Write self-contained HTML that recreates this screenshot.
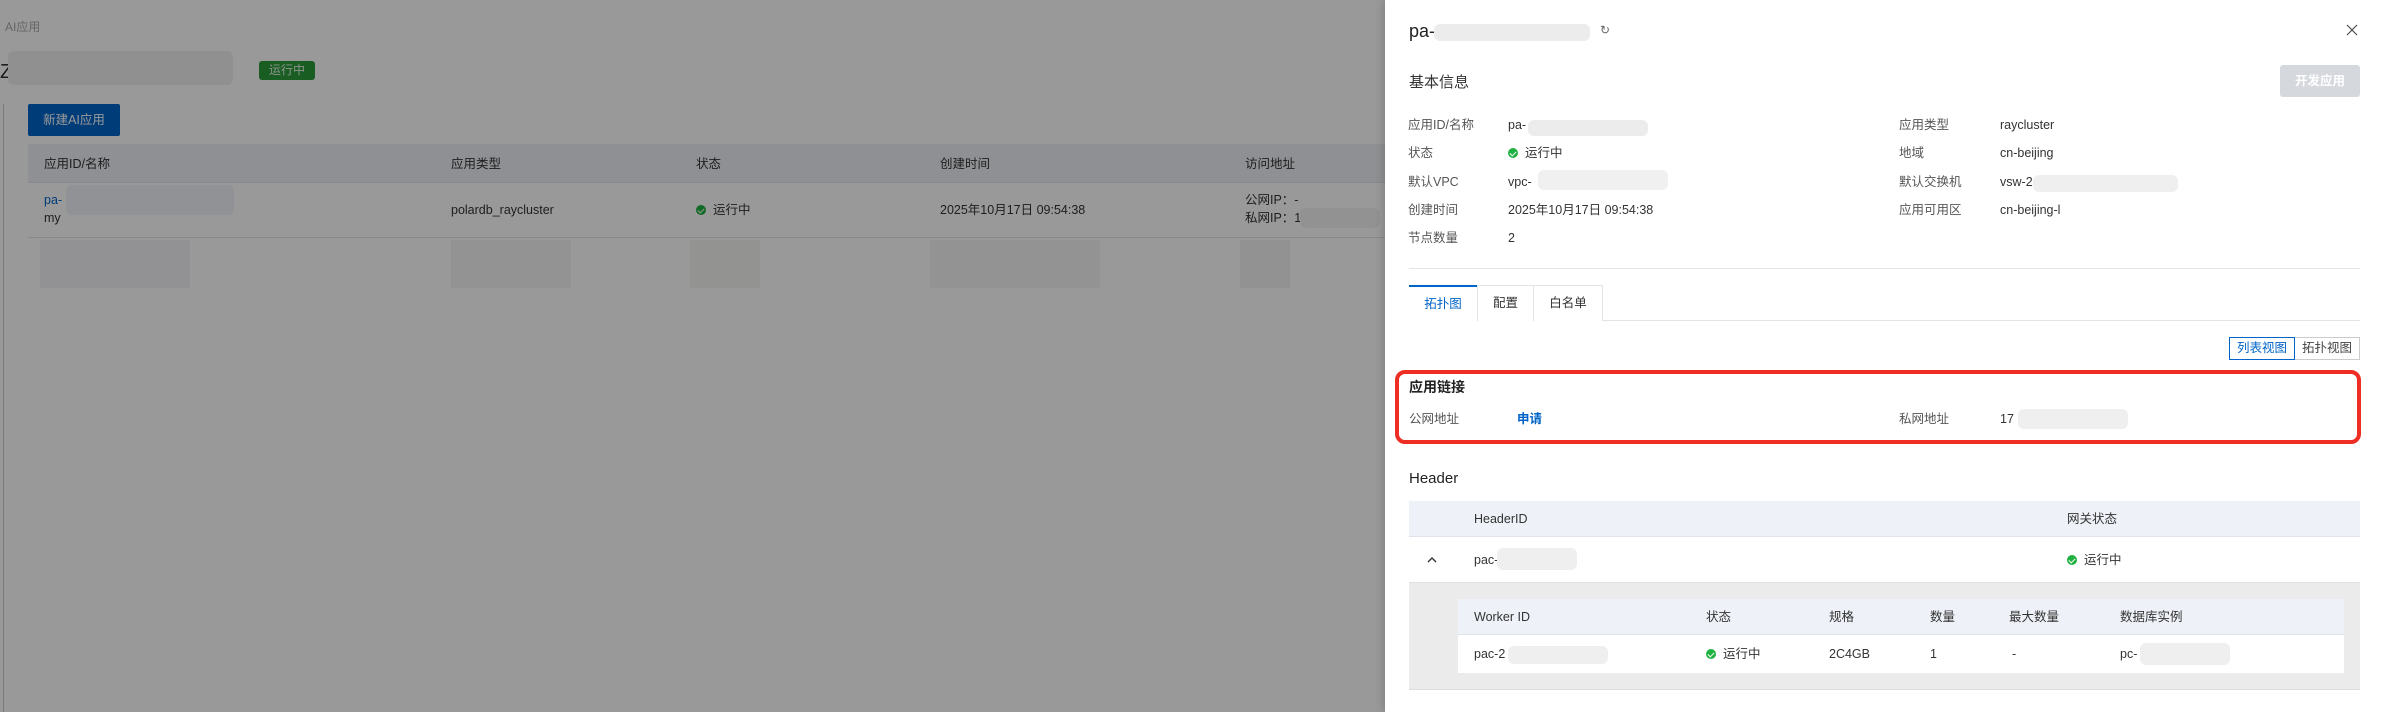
<!DOCTYPE html>
<html><head><meta charset="utf-8"><style>
*{margin:0;padding:0;box-sizing:border-box}
body{width:2383px;height:712px;overflow:hidden;position:relative;background:#fff;font-family:"Liberation Sans","Noto Sans CJK SC",sans-serif;font-size:12px;color:#333}
.a{position:absolute;white-space:nowrap;line-height:1}
.blur{position:absolute;background:#ececec;border-radius:6px}
.dot{display:inline-block;width:10px;height:10px;border-radius:50%;background:#1fb141;vertical-align:-1px;margin-right:7px;position:relative}
.dot:after{content:"";position:absolute;left:3px;top:2px;width:3px;height:5px;border:solid #fff;border-width:0 1.5px 1.5px 0;transform:rotate(45deg)}
#ov{position:absolute;left:0;top:0;width:1385px;height:712px;background:rgba(0,0,0,0.4)}
.lbl{color:#555;font-size:12.5px}
.val{color:#333;font-size:12.5px}
</style></head><body>
<div class="a" style="left:5px;top:21px;color:#aaa;font-size:12px">AI应用</div>
<div class="a" style="left:0;top:62px;font-size:20px;color:#333">Z</div>
<div class="blur" style="left:8px;top:51px;width:225px;height:34px;background:#f0f0f0"></div>
<div class="a" style="left:259px;top:61px;width:56px;height:19px;background:#2a9c3b;border-radius:3px;color:#e6f6e8;font-size:12px;line-height:19px;text-align:center">运行中</div>
<div style="position:absolute;left:3px;top:104px;width:1px;height:608px;background:#ccc"></div>
<div class="a" style="left:28px;top:104px;width:92px;height:32px;background:#0064c8;border-radius:2px;color:#fff;font-size:12.5px;line-height:32px;text-align:center">新建AI应用</div>
<div style="position:absolute;left:28px;top:144px;width:1357px;height:39px;background:#eef0f6;border-bottom:1px solid #e3e5ea"></div>
<div class="a" style="left:44px;top:158px;font-size:12.5px">应用ID/名称</div>
<div class="a" style="left:451px;top:158px;font-size:12.5px">应用类型</div>
<div class="a" style="left:696px;top:158px;font-size:12.5px">状态</div>
<div class="a" style="left:940px;top:158px;font-size:12.5px">创建时间</div>
<div class="a" style="left:1245px;top:158px;font-size:12.5px">访问地址</div>
<div class="a" style="left:44px;top:194px;color:#0064c8;font-size:12.5px">pa-</div>
<div class="a" style="left:44px;top:212px;font-size:12.5px">my</div>
<div class="blur" style="left:66px;top:185px;width:168px;height:30px;background:#f2f4f8"></div>
<div class="a" style="left:451px;top:204px;font-size:12.5px">polardb_raycluster</div>
<div class="a" style="left:696px;top:204px;font-size:12.5px"><span class="dot"></span>运行中</div>
<div class="a" style="left:940px;top:204px;font-size:12.5px">2025年10月17日 09:54:38</div>
<div class="a" style="left:1245px;top:194px;font-size:12.5px">公网IP：-</div>
<div class="a" style="left:1245px;top:212px;font-size:12.5px">私网IP：1</div>
<div class="blur" style="left:1300px;top:208px;width:80px;height:20px;background:#f3f3f3"></div>
<div style="position:absolute;left:28px;top:237px;width:1357px;height:1px;background:#e3e3e3"></div>
<div class="blur" style="left:40px;top:240px;width:150px;height:48px;background:#f3f4f7;border-radius:0"></div>
<div class="blur" style="left:451px;top:240px;width:120px;height:48px;background:#f5f5f5;border-radius:0"></div>
<div class="blur" style="left:690px;top:240px;width:70px;height:48px;background:#f5f5f3;border-radius:0"></div>
<div class="blur" style="left:930px;top:240px;width:170px;height:48px;background:#f5f5f5;border-radius:0"></div>
<div class="blur" style="left:1240px;top:240px;width:50px;height:48px;background:#f3f3f3;border-radius:0"></div>
<div id="ov"></div>

<div style="position:absolute;left:1385px;top:0;width:998px;height:712px;background:#fff;box-shadow:-2px 0 8px rgba(0,0,0,.15)"></div>
<div class="a" style="left:1409px;top:22px;font-size:18px;font-weight:500;color:#222">pa-</div>
<div class="blur" style="left:1434px;top:24px;width:156px;height:17px;background:#ececec"></div>
<div class="a" style="left:1600px;top:24px;font-size:12px;color:#666">↻</div>
<svg style="position:absolute;left:2346px;top:24px" width="12" height="12" viewBox="0 0 12 12"><path d="M1 1L11 11M11 1L1 11" stroke="#444" stroke-width="1.1"/></svg>
<div class="a" style="left:1409px;top:75px;font-size:15px;color:#333">基本信息</div>
<div class="a" style="left:2280px;top:65px;width:80px;height:32px;background:#d5d8dd;border-radius:3px;color:#fff;font-size:12.5px;font-weight:bold;line-height:32px;text-align:center">开发应用</div>

<div class="a lbl" style="left:1408px;top:119px">应用ID/名称</div><div class="a val" style="left:1508px;top:119px">pa-</div><div class="blur" style="left:1528px;top:120px;width:120px;height:16px"></div>
<div class="a lbl" style="left:1408px;top:147px">状态</div><div class="a val" style="left:1508px;top:147px"><span class="dot"></span>运行中</div>
<div class="a lbl" style="left:1408px;top:176px">默认VPC</div><div class="a val" style="left:1508px;top:176px">vpc-</div><div class="blur" style="left:1538px;top:170px;width:130px;height:20px;background:#f0f0f0"></div>
<div class="a lbl" style="left:1408px;top:204px">创建时间</div><div class="a val" style="left:1508px;top:204px">2025年10月17日 09:54:38</div>
<div class="a lbl" style="left:1408px;top:232px">节点数量</div><div class="a val" style="left:1508px;top:232px">2</div>
<div class="a lbl" style="left:1899px;top:119px">应用类型</div><div class="a val" style="left:2000px;top:119px">raycluster</div>
<div class="a lbl" style="left:1899px;top:147px">地域</div><div class="a val" style="left:2000px;top:147px">cn-beijing</div>
<div class="a lbl" style="left:1899px;top:176px">默认交换机</div><div class="a val" style="left:2000px;top:176px">vsw-2</div><div class="blur" style="left:2033px;top:175px;width:145px;height:17px;background:#efefef"></div>
<div class="a lbl" style="left:1899px;top:204px">应用可用区</div><div class="a val" style="left:2000px;top:204px">cn-beijing-l</div>
<div style="position:absolute;left:1409px;top:268px;width:951px;height:1px;background:#e5e5e5"></div>

<div style="position:absolute;left:1409px;top:320px;width:951px;height:1px;background:#e3e3e3"></div>
<div class="a" style="left:1409px;top:285px;width:68px;height:36px;border-top:2px solid #0064c8;background:#fff;color:#0064c8;font-size:12.5px;line-height:34px;text-align:center">拓扑图</div>
<div class="a" style="left:1477px;top:285px;width:57px;height:36px;border:1px solid #e3e3e3;border-bottom:none;background:#fff;font-size:12.5px;line-height:34px;text-align:center">配置</div>
<div class="a" style="left:1534px;top:285px;width:69px;height:36px;border:1px solid #e3e3e3;border-left:none;border-bottom:none;background:#fff;font-size:12.5px;line-height:34px;text-align:center">白名单</div>
<div class="a" style="left:2229px;top:337px;width:66px;height:23px;border:1px solid #0064c8;color:#0064c8;font-size:12.5px;line-height:21px;text-align:center;background:#fff;z-index:2">列表视图</div>
<div class="a" style="left:2294px;top:337px;width:66px;height:23px;border:1px solid #ccc;color:#444;font-size:12.5px;line-height:21px;text-align:center">拓扑视图</div>

<div style="position:absolute;left:1395px;top:370px;width:966px;height:74px;border:4px solid #ee2e24;border-radius:10px"></div>
<div class="a" style="left:1409px;top:380px;font-size:14px;font-weight:bold;color:#222">应用链接</div>
<div class="a lbl" style="left:1409px;top:413px">公网地址</div>
<div class="a" style="left:1517px;top:413px;font-size:12.5px;font-weight:bold;color:#0064c8">申请</div>
<div class="a lbl" style="left:1899px;top:413px">私网地址</div>
<div class="a val" style="left:2000px;top:413px">17</div>
<div class="blur" style="left:2018px;top:409px;width:110px;height:20px;background:#efefef"></div>

<div class="a" style="left:1409px;top:471px;font-size:15px;color:#222">Header</div>
<div style="position:absolute;left:1409px;top:501px;width:951px;height:36px;background:#eef1f7;border-bottom:1px solid #e0e3ea"></div>
<div class="a val" style="left:1474px;top:513px">HeaderID</div>
<div class="a val" style="left:2067px;top:513px">网关状态</div>
<svg style="position:absolute;left:1427px;top:556px" width="10" height="7" viewBox="0 0 10 7"><path d="M1 6L5 2L9 6" stroke="#333" stroke-width="1.4" fill="none"/></svg>
<div class="a val" style="left:1474px;top:554px">pac-</div>
<div class="blur" style="left:1497px;top:548px;width:80px;height:22px;background:#efefef"></div>
<div class="a val" style="left:2067px;top:554px"><span class="dot"></span>运行中</div>
<div style="position:absolute;left:1409px;top:582px;width:951px;height:108px;background:#ebebeb;border-top:1px solid #e0e0e0;border-bottom:1px solid #ddd"></div>
<div style="position:absolute;left:1458px;top:599px;width:886px;height:36px;background:#eef1f7;border-bottom:1px solid #e0e3ea"></div>
<div style="position:absolute;left:1458px;top:635px;width:886px;height:38px;background:#fff"></div>
<div class="a val" style="left:1474px;top:611px">Worker ID</div>
<div class="a val" style="left:1706px;top:611px">状态</div>
<div class="a val" style="left:1829px;top:611px">规格</div>
<div class="a val" style="left:1930px;top:611px">数量</div>
<div class="a val" style="left:2009px;top:611px">最大数量</div>
<div class="a val" style="left:2120px;top:611px">数据库实例</div>
<div class="a val" style="left:1474px;top:648px">pac-2</div>
<div class="blur" style="left:1508px;top:646px;width:100px;height:18px;background:#efefef"></div>
<div class="a val" style="left:1706px;top:648px"><span class="dot"></span>运行中</div>
<div class="a val" style="left:1829px;top:648px">2C4GB</div>
<div class="a val" style="left:1930px;top:648px">1</div>
<div class="a val" style="left:2012px;top:648px">-</div>
<div class="a val" style="left:2120px;top:648px">pc-</div>
<div class="blur" style="left:2140px;top:643px;width:90px;height:22px;background:#efefef"></div>
</body></html>
